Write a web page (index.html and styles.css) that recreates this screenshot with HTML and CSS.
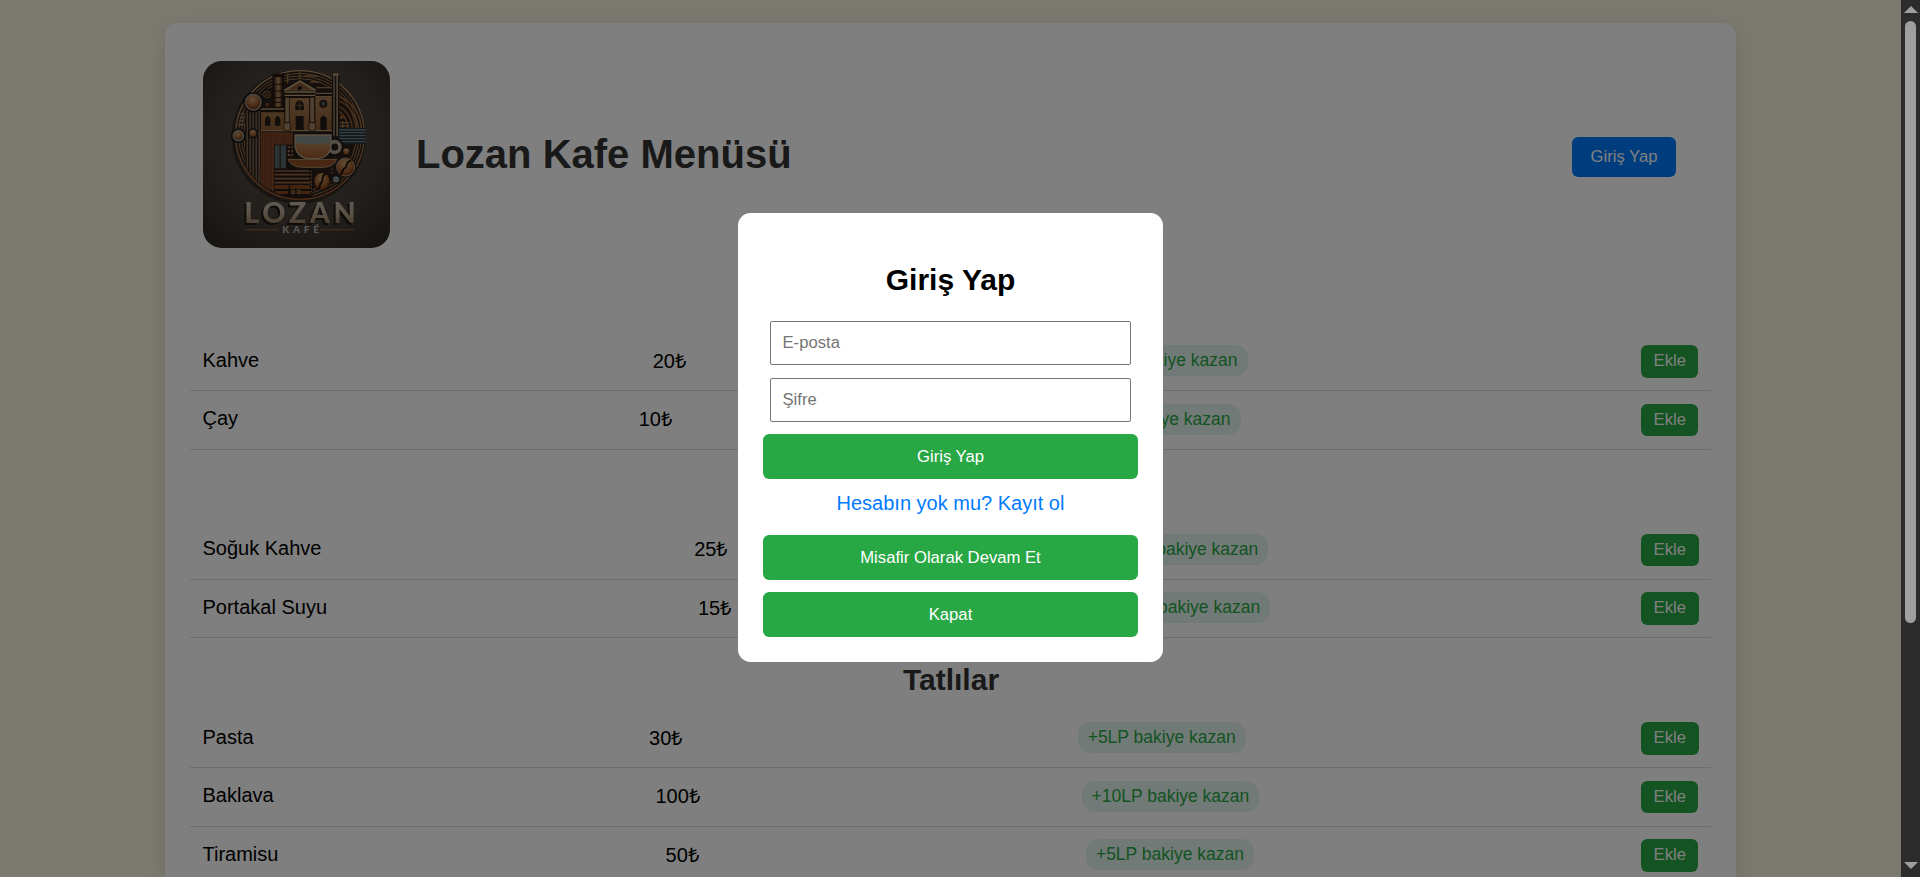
FILE: index.html
```html
<!DOCTYPE html>
<html lang="tr">
<head>
<meta charset="utf-8">
<title>Lozan Kafe Menüsü</title>
<link rel="stylesheet" href="styles.css">
</head>
<body>
<main class="container">
  <header class="header">
    <svg class="logo" viewBox="159 153 561 561" role="img" aria-label="Lozan Kafe">
      <defs>
        <radialGradient id="bg" cx=".5" cy=".42" r=".75"><stop offset="0" stop-color="#565048"/><stop offset=".6" stop-color="#443e38"/><stop offset="1" stop-color="#2c2723"/></radialGradient>
        <linearGradient id="copper" x2="0" y2="1"><stop offset="0" stop-color="#b99a70"/><stop offset="1" stop-color="#9a5428"/></linearGradient>
        <linearGradient id="wall" x2="0" y2="1"><stop offset="0" stop-color="#a67c50"/><stop offset="1" stop-color="#8a5a34"/></linearGradient>
        <linearGradient id="pipe"><stop offset="0" stop-color="#3a2010"/><stop offset=".5" stop-color="#b48a62"/><stop offset="1" stop-color="#3a2010"/></linearGradient>
        <linearGradient id="metal" x2="0" y2="1"><stop offset="0" stop-color="#c4bcb0"/><stop offset=".5" stop-color="#b8aa94"/><stop offset="1" stop-color="#8e6b50"/></linearGradient>
        <radialGradient id="ball" cx=".45" cy=".3" r=".7"><stop offset="0" stop-color="#c29c70"/><stop offset=".6" stop-color="#a0602e"/><stop offset="1" stop-color="#6a3414"/></radialGradient>
        <pattern id="stripes" width="9" height="9" patternUnits="userSpaceOnUse"><path fill="#2a211b" d="M0 0h9v9H0z"/><path fill="#988468" d="M2 0h3v9H2z"/></pattern>
        <pattern id="wood" width="7" height="9" patternUnits="userSpaceOnUse"><path fill="#82492a" d="M0 0h7v9H0z"/><path fill="#633218" d="M0 0h2v9H0z"/></pattern>
        <clipPath id="disc"><circle cx="450" cy="375" r="188"/></clipPath>
      </defs>
      <path fill="url(#bg)" d="M159 153h561v561H159z"/>
      <circle cx="446" cy="380" r="196" fill="none" stroke="#1c1713" stroke-width="10" opacity=".6"/>
      <circle cx="450" cy="375" r="194" fill="#2b211b"/>
      <circle cx="450" cy="375" r="193" fill="none" stroke="url(#copper)" stroke-width="4"/>
      <g clip-path="url(#disc)">
        <g fill="none" stroke="#94704a" stroke-width="3">
          <circle cx="450" cy="375" r="185"/><circle cx="450" cy="375" r="177"/><circle cx="450" cy="375" r="169"/>
          <path d="M562 258a105 105 0 0 1 72 110M566 272a90 90 0 0 1 54 96M566 288a78 78 0 0 1 40 80M566 303a60 60 0 0 1 26 60" stroke="#9a6236" stroke-width="4"/>
        </g>
        <path fill="none" stroke="#9a7148" stroke-width="4" d="M413 185v35M449 185v22M465 198h40M480 216h26M500 233h48M568 338h30M568 348h30M578 333v22"/>
        <path fill="url(#stripes)" d="M284 302h47v250h-47z"/>
        <path stroke="#8f7d64" stroke-width="5" d="M257 311h25M257 322h25M257 333h25M257 344h25"/>
        <path fill="url(#wood)" d="M332 366h98v38h-58v136h-40z"/>
        <path fill="#251b15" d="M372 404h60v75h-60z"/>
        <path fill="#57676b" d="M374 406h15v69h-15zM392 406h16v69h-16z"/>
        <path stroke="#9b7552" stroke-width="6" stroke-dasharray="7 4" d="M413 412h20M413 424h20M413 435h26"/>
        <path fill="#241914" d="M372 478h116v92H372z"/>
        <path stroke="#966642" stroke-width="5" d="M374 483h105M374 494h105M374 506h105M374 518h110"/>
        <path fill="#864923" d="M374 525h42v12h-42zM420 525h60v12h-60zM374 543h40v9h-40zM454 543h26v9h-26z"/>
        <path stroke="#ac8054" stroke-width="3" stroke-dasharray="5 5" d="M484 482v72M546 476v20"/>
        <g fill="none" stroke="#a77449" stroke-width="4"><circle cx="429" cy="546" r="5"/><circle cx="447" cy="546" r="5"/></g>
      </g>
      <path fill="#221813" d="M367 191h35v103h-35z"/>
      <path fill="url(#pipe)" d="M372 201h25v90h-25z"/>
      <path stroke="#24150d" stroke-width="3" d="M371 223h27M371 243h27M371 263h27M371 277h27"/>
      <path fill="#251913" d="M330 290h72v76h-72zM400 244h150v123H400z"/>
      <path fill="url(#wall)" d="M333 307h70v53h-70zM418 264h60v96h-60zM496 262h49v98h-49z"/>
      <path stroke="#ad9069" stroke-width="4" d="M332 297h70M496 250h50M496 260h50M332 362h216"/>
      <path fill="#a17a4e" stroke="#251711" stroke-width="3" d="M398 243l52-34 52 34z"/>
      <path fill="#7c5432" d="M418 238l32-20 32 20z"/>
      <path stroke="#baa27b" stroke-width="4" fill="none" d="M402 241l48-28 48 28M404 246h92M404 256h92"/>
      <circle cx="449" cy="235" r="6" fill="#251811"/>
      <path fill="#a28663" stroke="#28190f" stroke-width="2" d="M405 262h13v76h-13zM480 262h13v76h-13zM402 338h19v23h-19zM477 338h19v23h-19z"/>
      <g fill="#201b17">
        <path d="M345 347v-20q8-18 16 0v20zM375 347v-20q8-18 16 0v20zM436 300v-17q12-26 26 0v17zM437 318h24v42h-24zM511 360v-35q9-16 19 0v35z"/>
        <circle cx="520" cy="281" r="12"/>
      </g>
      <path stroke="#9d744b" stroke-width="2" d="M449 270v30M436 286h26M418 302h60M496 302h50"/>
      <circle cx="520" cy="281" r="7" fill="#4f5550"/>
      <path fill="#241a15" d="M546 187h22v193h-22z"/>
      <path fill="#9d8a6e" d="M550 195h4v184h-4zM559 195h5v184h-5zM548 188h18v10h-18z"/>
      <path fill="#263034" d="M565 354h83v49h-83z"/>
      <path stroke="#718086" stroke-width="4" d="M568 360h79M568 368h79M568 377h79M568 386h79M568 395h79"/>
      <path fill="#1f1814" d="M429 370h119v82H429z"/>
      <circle cx="554" cy="411" r="17" fill="none" stroke="#211914" stroke-width="22"/>
      <circle cx="554" cy="411" r="16" fill="none" stroke="#aaa092" stroke-width="11"/>
      <path fill="url(#copper)" stroke="#afa18a" stroke-width="4" d="M435 375h108v25q0 43-42 46h-24q-42-4-42-46z"/>
      <path fill="#83908c" d="M438 378h102v20q-51 7-102 0z"/>
      <path fill="#935127" stroke="#b08d68" stroke-width="3" d="M414 448h146q-8 22-40 24h-60q-37-1-46-24z"/>
      <g stroke="#1f1814" stroke-width="5">
        <circle cx="310" cy="277" r="28" fill="#8e8b82"/><circle cx="265" cy="377" r="20" fill="#8e8b82"/><circle cx="309" cy="370" r="13" fill="url(#ball)"/><circle cx="351" cy="253" r="14" fill="#936440"/><circle cx="589" cy="424" r="12" fill="url(#ball)"/><circle cx="558" cy="508" r="12" fill="#859095"/>
      </g>
      <circle cx="310" cy="277" r="21" fill="url(#ball)"/><circle cx="265" cy="377" r="12" fill="url(#ball)"/>
      <circle cx="351" cy="253" r="7" fill="#68422c" stroke="#251913" stroke-width="3"/>
      <circle cx="352" cy="284" r="5" fill="#8d502a"/><circle cx="575" cy="322" r="6" fill="#935126"/>
      <circle cx="587" cy="471" r="31" fill="#211914"/><circle cx="587" cy="471" r="27" fill="url(#ball)" stroke="#a79178" stroke-width="3"/>
      <ellipse cx="516" cy="514" rx="26" ry="29" fill="#211914"/><ellipse cx="516" cy="514" rx="23" ry="26" fill="url(#ball)"/>
      <path fill="none" stroke="#21150e" stroke-width="6" d="M604 451c-22 7-10 18-19 23-12 7-5 14-14 20M526 491c-16 13-4 19-11 25-9 7-2 15-10 20"/>
      <text class="logo-name" x="450" y="638" text-anchor="middle" fill="url(#metal)" textLength="334">LOZAN</text>
      <text class="logo-sub" x="397" y="669" fill="#b4b1a9" textLength="110">KAFÉ</text>
      <path stroke="#945d3e" stroke-width="3" d="M284 659h99M511 659h100"/>
    </svg>
    <h1 class="title">Lozan Kafe Menüsü</h1>
    <button class="login-button">Giriş Yap</button>
  </header>

  <section class="menu-section untitled">
    <div class="menu-item"><span class="label">Kahve</span><span class="label">20₺</span><span class="reward">+5LP bakiye kazan</span><button class="add-button">Ekle</button></div>
    <div class="menu-item"><span class="label">Çay</span><span class="label">10₺</span><span class="reward">+5LP bakiye kazan</span><button class="add-button">Ekle</button></div>
  </section>
  <section class="menu-section untitled">
    <div class="menu-item"><span class="label">Soğuk Kahve</span><span class="label">25₺</span><span class="reward">+5LP bakiye kazan</span><button class="add-button">Ekle</button></div>
    <div class="menu-item"><span class="label">Portakal Suyu</span><span class="label">15₺</span><span class="reward">+5LP bakiye kazan</span><button class="add-button">Ekle</button></div>
  </section>
  <section class="menu-section">
    <h2 class="section-title">Tatlılar</h2>
    <div class="menu-item"><span class="label">Pasta</span><span class="label">30₺</span><span class="reward">+5LP bakiye kazan</span><button class="add-button">Ekle</button></div>
    <div class="menu-item"><span class="label">Baklava</span><span class="label">100₺</span><span class="reward">+10LP bakiye kazan</span><button class="add-button">Ekle</button></div>
    <div class="menu-item"><span class="label">Tiramisu</span><span class="label">50₺</span><span class="reward">+5LP bakiye kazan</span><button class="add-button">Ekle</button></div>
  </section>
</main>

<div class="overlay">
  <form class="modal">
    <h2 class="modal-title">Giriş Yap</h2>
    <input class="field" type="email" placeholder="E-posta">
    <input class="field" type="password" placeholder="Şifre">
    <button class="modal-button" type="button">Giriş Yap</button>
    <a class="register-link">Hesabın yok mu? Kayıt ol</a>
    <button class="modal-button" type="button">Misafir Olarak Devam Et</button>
    <button class="modal-button" type="button">Kapat</button>
  </form>
</div>

<div class="scrollbar">
  <svg class="arrow" viewBox="0 0 14 7"><path d="M7 0l7 7H0z"/></svg>
  <div class="thumb"></div>
  <svg class="arrow" viewBox="0 0 14 7"><path d="M0 0h14L7 7z"/></svg>
</div>
</body>
</html>
```

FILE: styles.css
```css
* {
  box-sizing: border-box;
}

body {
  margin: 0;
  height: 877px;
  padding: 23px 19px 0 0;
  overflow: hidden;
  background: #f8f2e2;
  color: #000;
  font: 20px/normal "Liberation Sans", Arial, sans-serif;
}

button,
input {
  font: 16.667px/20px "Liberation Sans", Arial, sans-serif;
}

button {
  border: 0;
  border-radius: 6.25px;
  color: #fff;
}

.container {
  width: 1571px;
  height: 854px;
  margin: 0 auto;
  padding: 25px 25px 0;
  overflow: hidden;
  background: #fff;
  border-radius: 12.5px 12.5px 0 0;
  box-shadow: 0 5px 19px rgba(40, 70, 20, 0.14);
}

.header {
  display: flex;
  align-items: center;
  gap: 25px;
  height: 213px;
  padding: 0 35px 0 13px;
}

.logo {
  width: 187px;
  height: 187px;
  border-radius: 18.75px;
}

.logo-name {
  font: 900 86px Lato, sans-serif;
  filter: drop-shadow(-6px 6px 1px #1d1713);
}

.logo-sub {
  font: 900 30px Lato, sans-serif;
}

.title {
  flex: 1;
  margin: 0 0 2px 1px;
  color: #333;
  font-size: 40px;
  line-height: 46px;
}

.login-button {
  height: 40px;
  margin-top: 5px;
  padding: 0 18.5px;
  background: #007bff;
}

.untitled {
  padding-top: 71.5px;
}

.section-title {
  margin: 0;
  padding: 25px 0 12.5px 1px;
  color: #333;
  font-size: 30px;
  line-height: 34px;
  text-align: center;
}

.menu-item {
  display: flex;
  justify-content: space-between;
  align-items: center;
  height: 58.5px;
  padding: 12px 12.5px;
  border-bottom: 1px solid #ddd;
}

.label {
  margin-bottom: 2px;
}

.reward {
  margin-bottom: 1.5px;
  padding: 5px 10px;
  border-radius: 12.5px;
  background: #e2f5ec;
  color: #28a745;
  font-size: 17.5px;
  line-height: 21px;
}

.add-button {
  height: 32.5px;
  padding: 0 12.5px;
  background: #28a745;
}

.overlay {
  position: fixed;
  inset: 0 19px 0 0;
  display: flex;
  justify-content: center;
  align-items: center;
  background: rgba(0, 0, 0, 0.5);
}

.modal {
  display: flex;
  flex-direction: column;
  align-items: center;
  width: 425px;
  height: 449px;
  margin-top: -2px;
  padding: 25px;
  background: #fff;
  border-radius: 12.5px;
}

.modal > * {
  flex-shrink: 0;
}

.modal-title {
  margin: 25px 0 24px;
  font-size: 30px;
  line-height: 34px;
}

.field {
  width: 361px;
  height: 44px;
  margin-bottom: 13px;
  padding: 0 11.5px;
  border: 1px solid #767676;
  border-radius: 2px;
}

.field::placeholder {
  color: #757575;
}

.field + .modal-button {
  margin-top: -1px;
}

.modal-button {
  width: 375px;
  height: 45px;
  margin-bottom: 12px;
  background: #28a745;
}

.register-link {
  margin: 1px 0 20px;
  color: #007bff;
  line-height: 23px;
}

.scrollbar {
  position: fixed;
  inset: 0 0 0 auto;
  display: flex;
  flex-direction: column;
  align-items: center;
  width: 19px;
  padding: 6px 0 8px;
  background: #2c2c2c;
}

.arrow {
  width: 14px;
  height: 7px;
  fill: #9f9f9f;
}

.thumb {
  width: 11px;
  height: 602px;
  margin: 8px 0 auto;
  border-radius: 5.5px;
  background: #9f9f9f;
}
```
